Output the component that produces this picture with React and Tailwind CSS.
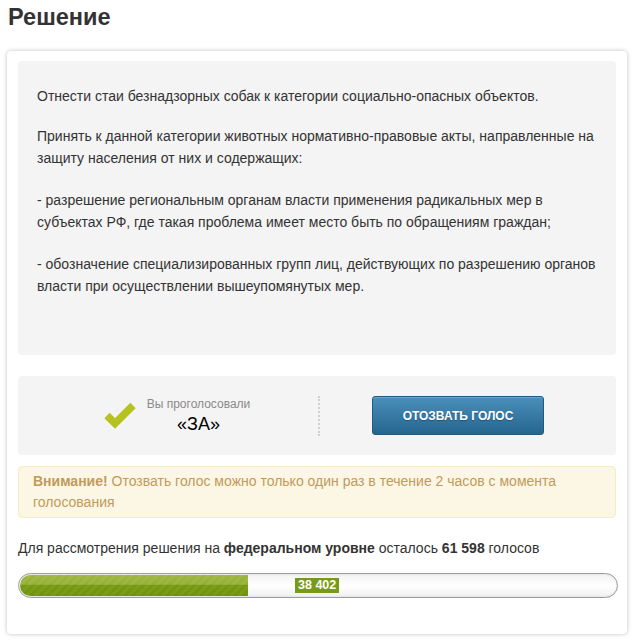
import React from "react";

export default function App() {
  const votes = 38402;
  return (
    <div className="w-[634px] h-[642px] bg-white text-[#333] font-['Liberation_Sans',Arial,sans-serif]">
      <h1 className="pl-2 pt-[3px] text-[23.5px] leading-[28px] font-bold text-[#333]">Решение</h1>
      <div className="mx-[7px] mt-[20px] w-[620px] rounded-[4px] bg-white shadow-[0_0_4px_rgba(0,0,0,0.25)] px-[11px] pt-[10px] pb-[36px]">
        <div className="rounded-[4px] bg-[#f4f4f4] pl-[19px] pr-[20px] pt-[24px] pb-[58px] text-[14px] leading-[22px]">
          <p className="mb-[18px]">Отнести стаи безнадзорных собак к категории социально-опасных объектов.</p>
          <p className="mb-[20px]">Принять к данной категории животных нормативно-правовые акты, направленные на защиту населения от них и содержащих:</p>
          <p className="mb-[20px]">- разрешение региональным органам власти применения радикальных мер в субъектах РФ, где такая проблема имеет место быть по обращениям граждан;</p>
          <p>- обозначение специализированных групп лиц, действующих по разрешению органов власти при осуществлении вышеупомянутых мер.</p>
        </div>

        <div className="mt-[21px] flex h-[79px] items-center rounded-[4px] bg-[#f4f4f4]">
          <div className="flex w-[300px] items-center justify-center pl-[18px]">
            <svg width="32" height="27" viewBox="0 0 32 27" className="mr-[11px]">
              <path d="M3 13.5 L11 21.5 L29 3.5" fill="none" stroke="#b6c21e" strokeWidth="7.5" strokeLinejoin="miter" />
            </svg>
            <div className="flex flex-col items-center">
              <span className="text-[12px] leading-[14px] text-[#8a8a8a]">Вы проголосовали</span>
              <span className="mt-[3px] text-[18px] leading-[20px] text-black">«ЗА»</span>
            </div>
          </div>
          <div className="h-[40px] border-l-2 border-dotted border-[#cfcfcf]" />
          <div className="flex flex-1 items-center justify-center pr-[20px]">
            <button className="h-[39px] w-[172px] rounded-[3px] border border-[#24597f] bg-gradient-to-b from-[#4a8fbb] to-[#25668f] text-[12px] font-bold uppercase text-white shadow-[inset_0_1px_0_rgba(255,255,255,0.2)] [text-shadow:0_1px_1px_rgba(0,0,0,0.3)]">
              Отозвать голос
            </button>
          </div>
        </div>

        <div className="mt-[11px] rounded-[4px] border border-[#f8ebc6] bg-[#fcf7e4] px-[14px] py-[4px] text-[14px] leading-[21px] text-[#c29a5b]">
          <b>Внимание!</b> Отозвать голос можно только один раз в течение 2 часов с момента голосования
        </div>

        <p className="mt-[20px] text-[14px] leading-[20px]">
          Для рассмотрения решения на <b>федеральном уровне</b> осталось <b>61 598</b> голосов
        </p>

        <div className="relative mt-[15px] h-[25px] w-[600px] rounded-full border border-[#9c9c9c] bg-gradient-to-b from-[#f2f2f2] via-white to-[#f0f0f0] p-[1px] shadow-[inset_0_0_2px_rgba(0,0,0,0.15)]">
          <div
            className="h-full rounded-l-full bg-[linear-gradient(to_bottom,#9cb63f_0%,#95b036_45%,#76990f_46%,#6f930b_100%)]"
            style={{ width: `${(votes / 100000) * 100 * (229 / 598) / 0.38402}%` }}
          >
            <div className="h-full w-full rounded-l-full bg-[repeating-linear-gradient(135deg,rgba(255,255,255,0.06)_0px,rgba(255,255,255,0.06)_3px,transparent_3px,transparent_6px)]" />
          </div>
          <div className="absolute left-[276px] top-[4px] bg-[#789a1b] px-[3px] text-[12.5px] font-bold leading-[15px] text-white">
            38 402
          </div>
        </div>
      </div>
    </div>
  );
}
